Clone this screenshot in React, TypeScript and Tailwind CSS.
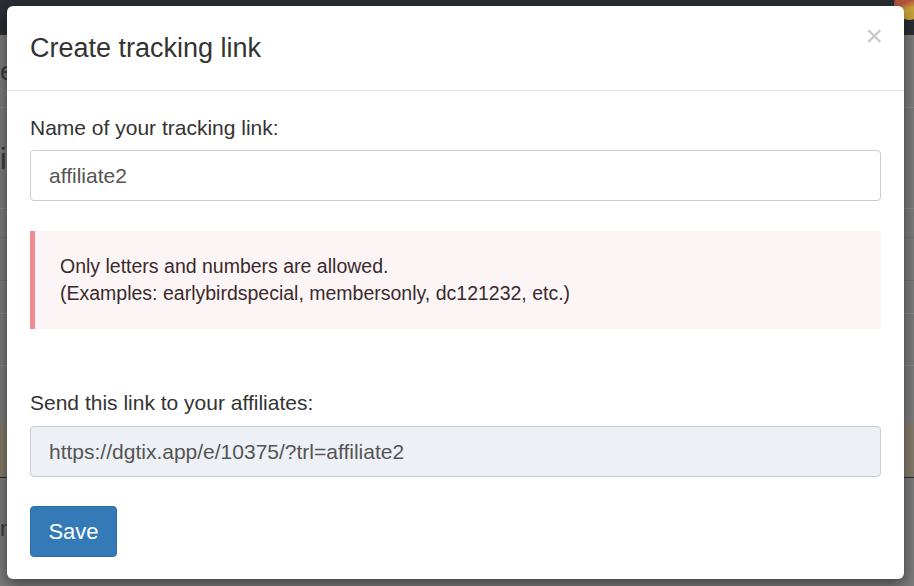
import React from "react";

const font = { fontFamily: '"Liberation Sans", Arial, Helvetica, sans-serif' };

function Backdrop() {
  // the page behind the modal, already dimmed by the overlay
  return (
    <div className="absolute inset-0 flex flex-col bg-[#7c7c7c] text-[#3a3a3a]">
      <div className="flex h-[35px] justify-end bg-[#2a2d34]">
        <div className="-mt-[10px] mr-[-10px] h-[30px] w-[30px] rounded-full bg-[linear-gradient(160deg,#b5533f_40%,#c9a33a_60%)]" />
      </div>
      <div className="flex h-[72px] items-center text-[26px]">e</div>
      <div className="flex h-[101px] items-center border-t border-[#8a8a8a] text-[30px]">i</div>
      <div className="h-[29px] border-t border-[#8a8a8a]" />
      <div className="h-[43px] border-t border-[#70707f]" />
      <div className="h-[33px] border-t border-[#70707f]" />
      <div className="h-[52px] border-t border-[#8a8a8a]" />
      <div className="h-[58px] border-t border-[#8a8a8a]" />
      <div className="h-[55px] border-b border-[#2c2c2c] bg-[#857b6b]" />
      <div className="flex h-[100px] items-center text-[22px]">ng</div>
    </div>
  );
}

export default function App() {
  return (
    <div className="relative h-[586px] w-[914px] overflow-hidden" style={font}>
      <Backdrop />
      <div className="absolute left-[7px] top-[6px] w-[897px] rounded-[6px] bg-white shadow-[0_5px_15px_rgba(0,0,0,0.5)]">
        <div className="relative flex h-[85px] items-center border-b border-[#e5e5e5] px-[23px]">
          <h4 className="text-[27px] leading-none text-[#333]">Create tracking link</h4>
          <button className="absolute right-[21px] top-[15px] text-[30px] leading-none text-[#c8c8c8]">
            ×
          </button>
        </div>
        <div className="px-[23px] pb-[22px] pt-[24px]">
          <label className="block text-[21px] leading-[26px] text-[#333]">
            Name of your tracking link:
          </label>
          <div className="mt-[9px] flex h-[51px] items-center rounded-[4px] border border-[#c5cdd8] px-[18px] text-[21px] text-[#555]">
            affiliate2
          </div>
          <div className="mt-[30px] flex h-[98px] flex-col justify-center border-l-[5px] border-[#f08a93] bg-[#fcf5f5] pl-[25px] text-[19.5px] leading-[27px] text-[#3b2a2e]">
            <p>Only letters and numbers are allowed.</p>
            <p>(Examples: earlybirdspecial, membersonly, dc121232, etc.)</p>
          </div>
          <label className="mt-[61px] block text-[21px] leading-[26px] text-[#333]">
            Send this link to your affiliates:
          </label>
          <div className="mt-[10px] flex h-[51px] items-center rounded-[4px] border border-[#c5cbd9] bg-[#edf0f5] px-[18px] text-[21px] text-[#555]">
            https://dgtix.app/e/10375/?trl=affiliate2
          </div>
          <button className="mt-[29px] flex h-[51px] w-[87px] items-center justify-center rounded-[4px] border border-[#2e6da4] bg-[#337ab7] text-[22px] text-white">
            Save
          </button>
        </div>
      </div>
    </div>
  );
}
